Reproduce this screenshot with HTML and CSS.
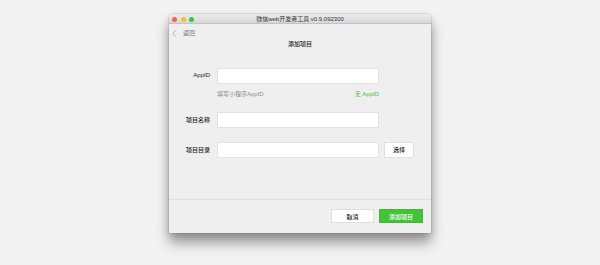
FILE: index.html
```html
<!DOCTYPE html>
<html lang="zh-CN">
<head>
    <meta charset="UTF-8">
    <meta name="viewport" content="width=device-width, initial-scale=1.0">
    <title>微信web开发者工具</title>
    <link rel="stylesheet" href="styles.css">
</head>
<body>
    <div class="window">
        <div class="titlebar">
            <div class="lights">
                <span class="light red"></span>
                <span class="light yellow"></span>
                <span class="light green"></span>
            </div>
            <div class="title-text">微信web开发者工具 v0.9.092300</div>
            <div></div>
        </div>

        <div class="back">
            <svg class="chevron" width="4" height="7" viewBox="0 0 4 7">
                <path d="M3.5 0.5 L0.7 3.5 L3.5 6.5" fill="none" stroke="#a0a0a0" stroke-width="0.8"/>
            </svg>
            <span>返回</span>
        </div>

        <h1 class="page-title">添加项目</h1>

        <div class="form">
            <div class="form-row">
                <label class="label latin">AppID</label>
                <input class="field" type="text">
            </div>
            <div class="hint-row">
                <span class="hint">填写小程序AppID</span>
                <a class="no-appid" href="#">无 AppID</a>
            </div>
            <div class="form-row spaced">
                <label class="label">项目名称</label>
                <input class="field" type="text">
            </div>
            <div class="form-row spaced">
                <label class="label">项目目录</label>
                <input class="field" type="text">
                <button class="btn btn-pick">选择</button>
            </div>
        </div>

        <div class="footer">
            <button class="btn btn-cancel">取消</button>
            <button class="btn btn-primary">添加项目</button>
        </div>
    </div>
</body>
</html>
```

FILE: styles.css
```css
:root {
    --page-bg: #f3f3f3;
    --window-bg: #efefef;
    --text-color: #222222;
    --muted-color: #8e8e8e;
    --green: #44c23a;
    --font: "Liberation Sans", "Noto Sans CJK SC", sans-serif;
}

html {
    height: 100%;
    background-color: var(--page-bg);
}

body {
    margin: 0;
    min-height: 100%;
    background-color: var(--page-bg);
    font-family: var(--font);
    font-size: 6px;
    color: var(--text-color);
    overflow: hidden;
}

.window {
    width: 262px;
    height: 219px;
    margin: 14px 0 0 169px;
    display: flex;
    flex-direction: column;
    background-color: var(--window-bg);
    border-radius: 3px 3px 0 0;
    box-shadow: 0 0 0 0.5px rgba(0, 0, 0, 0.15), 0 4px 8px rgba(0, 0, 0, 0.15), 0 10px 14px rgba(0, 0, 0, 0.35);
}

.titlebar {
    height: 10px;
    display: grid;
    grid-template-columns: 1fr auto 1fr;
    align-items: center;
    background: linear-gradient(#ececec, #d8d8d8);
    border-bottom: 0.5px solid #c2c2c2;
    border-radius: 3px 3px 0 0;
    box-sizing: border-box;
}

.lights {
    display: flex;
    gap: 3.7px;
    padding-left: 3px;
}

.light {
    width: 5px;
    height: 5px;
    border-radius: 50%;
}

.red { background-color: #fc5b57; }
.yellow { background-color: #fdbc2e; }
.green { background-color: #33c748; }

.title-text {
    color: #333;
    line-height: 10px;
}

.back {
    height: 8px;
    padding: 5px 0 0 3px;
    display: flex;
    align-items: center;
    gap: 7px;
    color: #7a7a7a;
    line-height: 8px;
}

.page-title {
    margin: 3px 0 0;
    font-size: 6px;
    font-weight: 500;
    line-height: 9px;
    text-align: center;
    color: var(--text-color);
}

.form {
    margin-top: 18.5px;
    padding-left: 5px;
}

.form-row {
    display: flex;
    align-items: center;
    height: 16px;
}

.form-row.spaced {
    margin-top: 14px;
}

.label {
    width: 36px;
    margin-right: 7px;
    margin-top: -1px;
    text-align: right;
    font-weight: 500;
    color: var(--text-color);
}

.field {
    width: 162px;
    height: 16px;
    margin: 0;
    padding: 0;
    box-sizing: border-box;
    border: 0.5px solid #e2e2e2;
    background-color: #ffffff;
    outline: none;
}

.hint-row {
    display: flex;
    justify-content: space-between;
    width: 162px;
    margin: 6px 0 0 43px;
    line-height: 8px;
}

.hint {
    color: var(--muted-color);
}

.no-appid {
    color: #3fbf35;
    text-decoration: none;
}

.btn {
    margin: 0;
    padding: 0;
    font-family: var(--font);
    font-size: 6px;
    font-weight: 500;
    color: var(--text-color);
    background-color: #ffffff;
    border: 0.5px solid #e0e0e0;
    box-sizing: border-box;
    cursor: pointer;
}

.btn-pick {
    width: 30px;
    height: 16px;
    margin-left: 5px;
}

.footer {
    margin-top: auto;
    border-top: 1px solid #e0e0e0;
    padding: 9px 8px 10px;
    display: flex;
    justify-content: flex-end;
    gap: 5px;
}

.btn-cancel {
    width: 43px;
    height: 14px;
}

.btn-primary {
    width: 44px;
    height: 14px;
    color: #ffffff;
    background-color: var(--green);
    border-color: #3fb935;
}
```
